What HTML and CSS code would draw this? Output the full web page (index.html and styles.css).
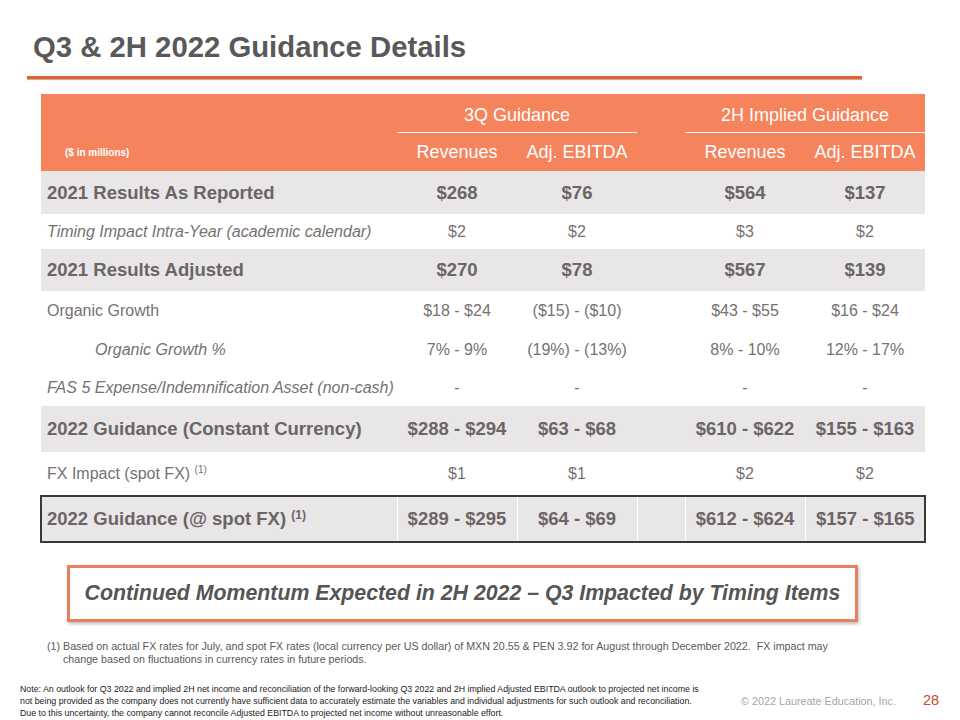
FILE: index.html
```html
<!DOCTYPE html>
<html lang="en">
 <head>
  <meta charset="utf-8">
  <title>Q3 &amp; 2H 2022 Guidance Details</title>
  <link rel="stylesheet" href="styles.css">
 </head>
 <body>
  <div class="slide">
	<h1 class="title">Q3 &amp; 2H 2022 Guidance Details</h1>
	<div class="rule"></div>

	<table class="guide">
		<colgroup>
			<col class="c-label">
			<col class="c-num">
			<col class="c-num">
			<col class="c-gap">
			<col class="c-num">
			<col class="c-num">
		</colgroup>
		<thead>
			<tr class="h1">
				<th></th>
				<th colspan="2"><span class="grp">3Q Guidance</span></th>
				<th></th>
				<th colspan="2"><span class="grp">2H Implied Guidance</span></th>
			</tr>
			<tr class="h2">
				<th class="unit">($ in millions)</th>
				<th>Revenues</th>
				<th>Adj. EBITDA</th>
				<th></th>
				<th>Revenues</th>
				<th>Adj. EBITDA</th>
			</tr>
		</thead>
		<tbody>
			<tr class="bold shade r-a">
				<td>2021 Results As Reported</td>
				<td>$268</td><td>$76</td><td></td><td>$564</td><td>$137</td>
			</tr>
			<tr class="ital r-b">
				<td>Timing Impact Intra-Year (academic calendar)</td>
				<td>$2</td><td>$2</td><td></td><td>$3</td><td>$2</td>
			</tr>
			<tr class="bold shade r-c">
				<td>2021 Results Adjusted</td>
				<td>$270</td><td>$78</td><td></td><td>$567</td><td>$139</td>
			</tr>
			<tr class="r-d">
				<td>Organic Growth</td>
				<td>$18 - $24</td><td>($15) - ($10)</td><td></td><td>$43 - $55</td><td>$16 - $24</td>
			</tr>
			<tr class="ital r-d">
				<td class="indent">Organic Growth %</td>
				<td>7% - 9%</td><td>(19%) - (13%)</td><td></td><td>8% - 10%</td><td>12% - 17%</td>
			</tr>
			<tr class="ital r-e">
				<td>FAS 5 Expense/Indemnification Asset (non-cash)</td>
				<td>-</td><td>-</td><td></td><td>-</td><td>-</td>
			</tr>
			<tr class="bold shade r-f">
				<td>2022 Guidance (Constant Currency)</td>
				<td>$288 - $294</td><td>$63 - $68</td><td></td><td>$610 - $622</td><td>$155 - $163</td>
			</tr>
			<tr class="r-g">
				<td>FX Impact (spot FX) <sup>(1)</sup></td>
				<td>$1</td><td>$1</td><td></td><td>$2</td><td>$2</td>
			</tr>
			<tr class="bold shade boxed r-f">
				<td>2022 Guidance (@ spot FX) <sup>(1)</sup></td>
				<td>$289 - $295</td><td>$64 - $69</td><td></td><td>$612 - $624</td><td>$157 - $165</td>
			</tr>
		</tbody>
	</table>

	<div class="callout">Continued Momentum Expected in 2H 2022 &ndash; Q3 Impacted by Timing Items</div>

	<div class="fn">
		<span class="fn-no">(1)</span>
		<p>Based on actual FX rates for July, and spot FX rates (local currency per US dollar) of MXN 20.55 &amp; PEN 3.92 for August through December 2022.&nbsp; FX impact may change based on fluctuations in currency rates in future periods.</p>
	</div>

	<div class="foot">
		<p class="note">Note: An outlook for Q3 2022 and implied 2H net income and reconciliation of the forward-looking Q3 2022 and 2H implied Adjusted EBITDA outlook to projected net income is<br>not being provided as the company does not currently have sufficient data to accurately estimate the variables and individual adjustments for such outlook and reconciliation.<br>Due to this uncertainty, the company cannot reconcile Adjusted EBITDA to projected net income without unreasonable effort.</p>
		<span class="copy">&copy; 2022 Laureate Education, Inc.</span>
		<span class="page">28</span>
	</div>
  </div>
 </body>
</html>
```

FILE: styles.css
```css
*{margin:0;padding:0;}
body{
	width:960px;
	height:720px;
	background:#fff;
	font-family:"Liberation Sans", Arial, sans-serif;
	color:#595959;
	overflow:hidden;
}
.slide{
	width:960px;
	height:720px;
	display:flex;
	flex-direction:column;
}
.title{
	font-size:29.3px;
	font-weight:bold;
	color:#595959;
	margin:30px 0 0 33px;
	line-height:34px;
}
.rule{
	width:835px;
	height:3px;
	margin:12px 0 0 27px;
	background:#e0622f;
	box-shadow:0 1px 1px rgba(120,50,20,.45);
}

/* table */
.guide{
	margin:15px 0 0 41px;
	width:884px;
	border-collapse:collapse;
	table-layout:fixed;
}
.c-label{width:356px;}
.c-num{width:120px;}
.c-gap{width:48px;}
.guide th{
	background:#f5845d;
	color:#fff;
	font-weight:normal;
	font-size:18px;
	text-align:center;
	padding:0;
}
.h1 th{height:39px;vertical-align:bottom;}
.h2 th{height:38px;}
.grp{
	display:block;
	border-bottom:1.5px solid #fff;
	line-height:34px;
	padding-top:4px;
}
.guide th.unit{
	font-size:10px;
	font-weight:bold;
	text-align:left;
	padding-left:24px;
}
.guide td{
	font-size:16px;
	color:#767171;
	text-align:center;
	padding:0;
}
.guide td:first-child{
	text-align:left;
	padding-left:6px;
}
.guide td.indent{padding-left:54px;}
.guide tr.ital td:first-child{font-style:italic;}
.guide tr.bold td{
	font-weight:bold;
	font-size:18.5px;
	color:#6b6565;
}
.shade td{background:#e8e6e7;}
.r-a td{height:43px;}
.r-b td{height:35px;}
.r-c td{height:42px;}
.r-d td{height:39px;}
.r-e td{height:37px;}
.r-f td{height:46px;}
.r-g td{height:44px;}
sup{
	font-size:10px;
	vertical-align:6px;
	line-height:0;
}
.guide tr.bold sup{font-size:12px;}
.boxed{
	outline:2px solid #3a3838;
	outline-offset:-1px;
}
.boxed td{border-left:1.5px solid #fff;}
.boxed td:first-child{border-left:none;}

/* callout */
.callout{
	margin:23px 0 0 67px;
	width:785px;
	height:51px;
	border:3px solid #e8825e;
	box-shadow:1px 2px 3px rgba(0,0,0,.25);
	font-size:21.3px;
	font-weight:bold;
	font-style:italic;
	color:#555;
	text-align:center;
	line-height:51px;
}

/* footnote */
.fn{
	display:flex;
	margin:18px 0 0 47px;
	font-size:10.7px;
	line-height:13px;
	color:#595959;
}
.fn-no{width:16px;flex:none;}
.fn p{width:790px;}

.foot{
	display:flex;
	align-items:flex-end;
	margin-top:auto;
	margin-bottom:1px;
	padding-left:20px;
}
.note{
	width:690px;
	font-size:8.8px;
	line-height:12px;
	color:#222;
	white-space:nowrap;
}
.copy{
	margin-left:31px;
	font-size:10.8px;
	color:#a6a6a6;
	margin-bottom:12px;
}
.page{
	margin-left:27px;
	font-size:14.5px;
	color:#c0502a;
	margin-bottom:11px;
}
```
